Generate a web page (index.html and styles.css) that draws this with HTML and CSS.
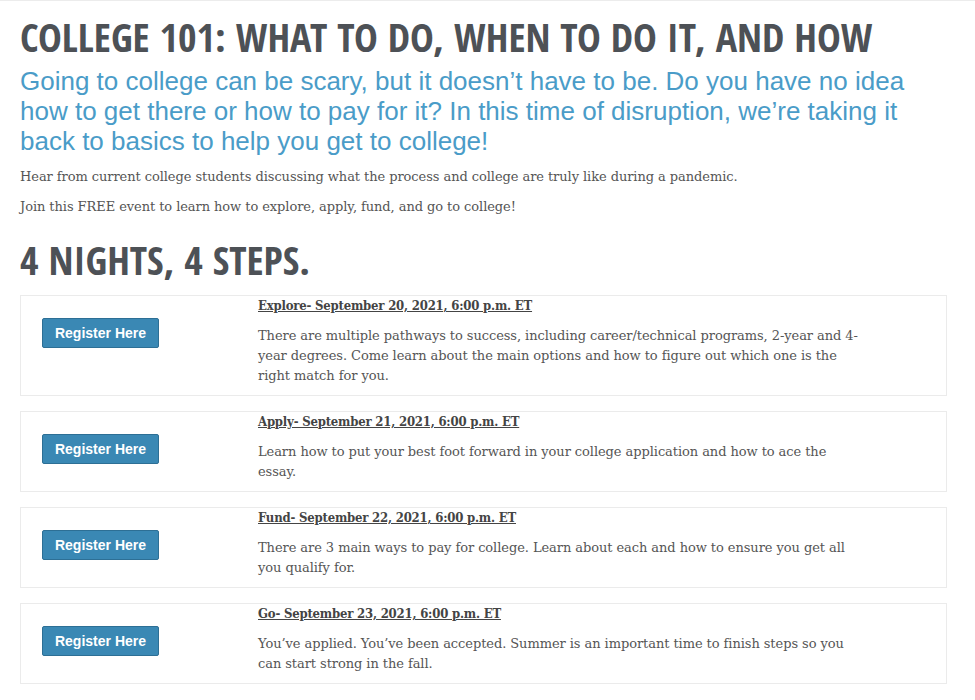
FILE: index.html
```html
<!DOCTYPE html>
<html lang="en">
<head>
<meta charset="utf-8">
<title>College 101</title>
<link rel="stylesheet" href="styles.css">
</head>
<body>
<div class="topline"></div>
<main class="page">
  <h1 class="title">COLLEGE 101: WHAT TO DO, WHEN TO DO IT, AND HOW</h1>
  <p class="lead">Going to college can be scary, but it doesn’t have to be. Do you have no idea how to get there or how to pay for it? In this time of disruption, we’re taking it back to basics to help you get to college!</p>
  <p class="text">Hear from current college students discussing what the process and college are truly like during a pandemic.</p>
  <p class="text">Join this FREE event to learn how to explore, apply, fund, and go to college!</p>
  <h2 class="subtitle">4 NIGHTS, 4 STEPS.</h2>

  <div class="events">
    <section class="event">
      <div class="event-action"><a class="btn" href="#">Register Here</a></div>
      <div class="event-body">
        <h3 class="event-title">Explore- September 20, 2021, 6:00 p.m. ET</h3>
        <p class="event-desc">There are multiple pathways to success, including career/technical programs, 2-year and 4-year degrees. Come learn about the main options and how to figure out which one is the right match for you.</p>
      </div>
    </section>
    <section class="event">
      <div class="event-action"><a class="btn" href="#">Register Here</a></div>
      <div class="event-body">
        <h3 class="event-title">Apply- September 21, 2021, 6:00 p.m. ET</h3>
        <p class="event-desc">Learn how to put your best foot forward in your college application and how to ace the essay.</p>
      </div>
    </section>
    <section class="event">
      <div class="event-action"><a class="btn" href="#">Register Here</a></div>
      <div class="event-body">
        <h3 class="event-title">Fund- September 22, 2021, 6:00 p.m. ET</h3>
        <p class="event-desc">There are 3 main ways to pay for college. Learn about each and how to ensure you get all you qualify for.</p>
      </div>
    </section>
    <section class="event">
      <div class="event-action"><a class="btn" href="#">Register Here</a></div>
      <div class="event-body">
        <h3 class="event-title">Go- September 23, 2021, 6:00 p.m. ET</h3>
        <p class="event-desc">You’ve applied. You’ve been accepted. Summer is an important time to finish steps so you can start strong in the fall.</p>
      </div>
    </section>
  </div>
</main>
</body>
</html>
```

FILE: styles.css
```css
html, body {
  margin: 0;
  padding: 0;
  background: #ffffff;
}

.topline {
  height: 1px;
  background: #ececec;
}

.page {
  padding: 0 28px 0 20px;
}

.title {
  margin: 0;
  padding-top: 14px;
  font-family: "Open Sans Condensed", "Roboto Condensed", sans-serif;
  font-weight: 700;
  font-size: 40px;
  line-height: 44px;
  color: #4d5156;
  white-space: nowrap;
}

.lead {
  margin: 7px 0 0;
  font-family: "Liberation Sans", Arial, sans-serif;
  font-size: 26px;
  line-height: 30px;
  color: #4a9cc8;
}

.text {
  margin: 11px 0 0;
  font-family: "DejaVu Serif", serif;
  font-size: 13px;
  letter-spacing: -0.07px;
  line-height: 20px;
  color: #555;
}

.text + .text {
  margin-top: 10px;
}

.subtitle {
  margin: 21px 0 0;
  font-family: "Open Sans Condensed", "Roboto Condensed", sans-serif;
  font-weight: 700;
  font-size: 40px;
  line-height: 44px;
  color: #4d5156;
}

.events {
  display: flex;
  flex-direction: column;
  gap: 15px;
  margin-top: 13px;
}

.event {
  display: flex;
  border: 1px solid #ebebeb;
}

.event-action {
  width: 237px;
  flex: none;
  padding: 22px 0 0 21px;
  box-sizing: border-box;
}

.btn {
  display: inline-block;
  width: 117px;
  height: 30px;
  box-sizing: border-box;
  background: #3a88b4;
  border: 1px solid #2d6f95;
  border-radius: 2px;
  color: #fff;
  font-family: "Liberation Sans", Arial, sans-serif;
  font-weight: 700;
  font-size: 14px;
  line-height: 28px;
  text-align: center;
  text-decoration: none;
}

.event-body {
  width: 610px;
  padding-bottom: 9px;
}

.event-title {
  margin: 0;
  font-family: "DejaVu Serif Condensed", "DejaVu Serif", serif;
  font-weight: 700;
  font-size: 13px;
  letter-spacing: -0.2px;
  line-height: 20px;
  color: #444;
  text-decoration: underline;
}

.event-desc {
  margin: 10px 0 0;
  font-family: "DejaVu Serif", serif;
  font-size: 13px;
  letter-spacing: -0.07px;
  line-height: 20px;
  color: #555;
}
```
